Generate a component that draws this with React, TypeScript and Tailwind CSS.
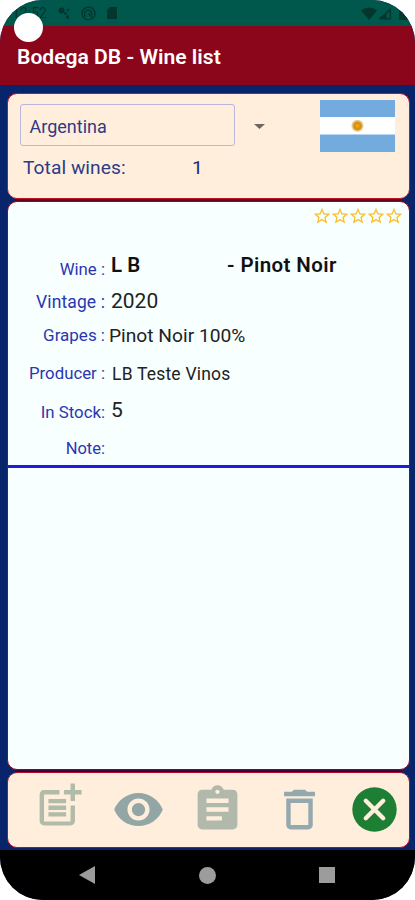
import { clsx } from 'clsx';
import {
  MdAssignment,
  MdDeleteOutline,
  MdPostAdd,
  MdStarBorder,
  MdVisibility,
} from 'react-icons/md';

interface WineField {
  label: string;
  value: string;
  rowClass: string;
  labelClass: string;
  valueClass: string;
}

const fields: WineField[] = [
  {
    label: 'Vintage :',
    value: '2020',
    rowClass: 'h-[33px]',
    labelClass: 'text-[17.5px] tracking-[0.1px]',
    valueClass: 'pl-[6px] pb-[2px] text-[21px]',
  },
  {
    label: 'Grapes :',
    value: 'Pinot Noir 100%',
    rowClass: 'h-[34px]',
    labelClass: 'text-[17px]',
    valueClass: 'pl-[4px] text-[19.2px]',
  },
  {
    label: 'Producer :',
    value: 'LB Teste Vinos',
    rowClass: 'h-[42px]',
    labelClass: 'text-[16.8px]',
    valueClass: 'pl-[7px] text-[17.5px] tracking-[0.2px]',
  },
  {
    label: 'In Stock:',
    value: '5',
    rowClass: 'h-[35px] pt-[1px]',
    labelClass: 'text-[16.8px]',
    valueClass: 'pl-[6px] pb-[4px] text-[21px]',
  },
  {
    label: 'Note:',
    value: '',
    rowClass: 'h-[35px] pt-[4px]',
    labelClass: 'text-[16.5px]',
    valueClass: '',
  },
];

function StatusBar() {
  return (
    <div className="relative h-[26px] bg-[#00574b] text-[#04352f]">
      <div className="flex h-full items-center pl-[12px]">
        <span className="w-[45px] text-[14px] leading-none">12:52</span>
        <svg className="h-[14px] w-[14px]" viewBox="0 0 14 14" fill="currentColor">
          <circle cx="4.5" cy="4.5" r="3" />
          <circle cx="11" cy="4" r="1.3" />
          <circle cx="8.5" cy="7.5" r="1.4" />
          <circle cx="10.5" cy="11" r="1.7" />
        </svg>
        <svg
          className="ml-[10px] h-[15px] w-[15px]"
          viewBox="0 0 15 15"
          fill="none"
          stroke="currentColor"
          strokeWidth="1.4"
        >
          <circle cx="7.5" cy="7.5" r="6.4" />
          <path d="M4.8 10.5a3.6 3.6 0 1 1 5.6-1.2M7.2 7l3.6 4.2" />
        </svg>
        <svg className="ml-[10px] h-[14px] w-[12px]" viewBox="0 0 12 14" fill="currentColor">
          <path d="M4 1h7v12H1V4z" />
        </svg>
        <svg className="ml-[243px] h-[13px] w-[16px]" viewBox="0 0 16 13" fill="currentColor">
          <path d="M0 3.4Q8-2.6 16 3.4L8 13z" />
        </svg>
        <svg className="ml-[1px] h-[13px] w-[14px]" viewBox="0 0 15 13" fill="currentColor">
          <path fillRule="evenodd" d="M14 0v13H0zM12.5 4v7.5H9V7z" />
        </svg>
        <svg className="ml-[7px] h-[13px] w-[8px]" viewBox="0 0 8 13" fill="currentColor">
          <path d="M0 1h2V0h4v1h2v12H0z" />
        </svg>
      </div>
      {/* camera cutout */}
      <div className="absolute left-[14px] top-[13px] size-[29px] rounded-full bg-white" />
    </div>
  );
}

function Flag() {
  return (
    <svg className="h-[52px] w-[75px]" viewBox="0 0 75 52">
      <rect width="75" height="52" fill="#74abdf" />
      <rect y="17" width="75" height="17.5" fill="#fff" />
      <circle cx="37.5" cy="25.8" r="6" fill="#d9b36c" opacity=".75" />
      <circle cx="37.5" cy="25.8" r="4.4" fill="#d98f14" />
      <circle cx="37.5" cy="25.8" r="2" fill="#f0a30c" />
    </svg>
  );
}

function FilterCard() {
  return (
    <div className="h-[106px] rounded-[10px] border border-[#c0102a] bg-[#ffeedb] pl-[12px] pr-[14px] pt-[6px]">
      <div className="flex h-[52px] items-start">
        <div className="mt-[4px] flex h-[42px] w-[215px] items-center rounded-[3px] border border-[#b9b7dc] pl-[8.5px] pt-[2px] text-[18px] text-[#2f3b87]">
          Argentina
        </div>
        <svg className="ml-[19px] mt-[24px] h-[5px] w-[11px]" viewBox="0 0 11 5" fill="#6f675e">
          <path d="M0 0h11L5.5 5z" />
        </svg>
        <div className="ml-auto">
          <Flag />
        </div>
      </div>
      <div className="flex pl-[3px] pt-[2px] text-[19.2px] leading-[28px] text-[#2f3b87]">
        <span className="w-[169px] tracking-[0.05px]">Total wines:</span>
        <span className="text-[#1b2a80]">1</span>
      </div>
    </div>
  );
}

function WineList() {
  return (
    <div className="h-[569px] overflow-hidden rounded-[10px] border border-[#8c0820] bg-[#f7ffff]">
      <div className="flex h-[52px] justify-end pr-[6.5px] pt-[4px] text-[#fbc02d]">
        {[1, 2, 3, 4, 5].map(star => (
          <span key={star} className="flex w-[18px] justify-center">
            <MdStarBorder className="shrink-0" size={20} />
          </span>
        ))}
      </div>
      <div className="flex h-[32px] items-center">
        <span className="w-[97px] text-right text-[16.8px] text-[#2b36b0]">Wine :</span>
        <span className="flex pb-[9px] pl-[6px] text-[20.5px] font-semibold text-[#111]">
          <span className="w-[116px]">L B</span>
          <span className="tracking-[0.4px]">- Pinot Noir</span>
        </span>
      </div>
      {fields.map(field => (
        <div key={field.label} className={clsx('flex items-center', field.rowClass)}>
          <span className={clsx('w-[97px] text-right text-[#2b36b0]', field.labelClass)}>
            {field.label}
          </span>
          <span className={clsx('text-[#222]', field.valueClass)}>{field.value}</span>
        </div>
      ))}
      <div className="h-[3px] bg-[#1c1cdc]" />
    </div>
  );
}

function Toolbar() {
  return (
    <div className="flex h-[76px] items-center rounded-[10px] border border-[#b00d2b] bg-[#ffeedb] pl-[25px] pb-[1px]">
      <button className="-mt-[9px]">
        <MdPostAdd size={53} color="#b0bba9" />
      </button>
      <button className="ml-[26px]">
        <MdVisibility size={53} color="#93a6a6" />
      </button>
      <button className="ml-[26px]">
        <MdAssignment size={53} color="#b0b9ab" />
      </button>
      <button className="ml-[29px]">
        <MdDeleteOutline size={53} color="#93a9ae" />
      </button>
      <button className="ml-[25.5px]">
        <svg className="size-[45px]" viewBox="0 0 45 45">
          <circle cx="22.5" cy="22.5" r="22.2" fill="#1d7f33" />
          <path
            d="M13.8 13.8l17.4 17.4M31.2 13.8L13.8 31.2"
            stroke="#ffeedb"
            strokeWidth="4.4"
            strokeLinecap="round"
          />
        </svg>
      </button>
    </div>
  );
}

function NavBar() {
  return (
    <div className="flex h-[50px] items-center bg-black pl-[79px]">
      <svg className="h-[18px] w-[16px]" viewBox="0 0 16 18" fill="#9c9c9c">
        <path d="M16 0v18L0 9z" />
      </svg>
      <div className="ml-[104px] size-[17px] rounded-full bg-[#9c9c9c]" />
      <div className="ml-[103px] size-[16px] bg-[#9c9c9c]" />
    </div>
  );
}

export default function App() {
  return (
    <div className="h-[900px] w-[415px] bg-white font-[Roboto,sans-serif]">
      <div className="flex h-full flex-col overflow-hidden rounded-[43px] bg-[#08246a]">
        <StatusBar />
        <header className="flex h-[59px] items-center bg-[#8b061b] pl-[17px] pt-[3px]">
          <h1 className="text-[21.1px] font-semibold text-white">Bodega DB - Wine list</h1>
        </header>
        <main className="flex h-[765px] flex-col pl-[7px] pr-[5px] pt-[8px]">
          <FilterCard />
          <div className="mx-[8px] h-[2px] bg-[#5e0718]" />
          <WineList />
          <div className="mx-[8px] h-[2px] bg-[#3a0733]" />
          <Toolbar />
        </main>
        <NavBar />
      </div>
    </div>
  );
}
